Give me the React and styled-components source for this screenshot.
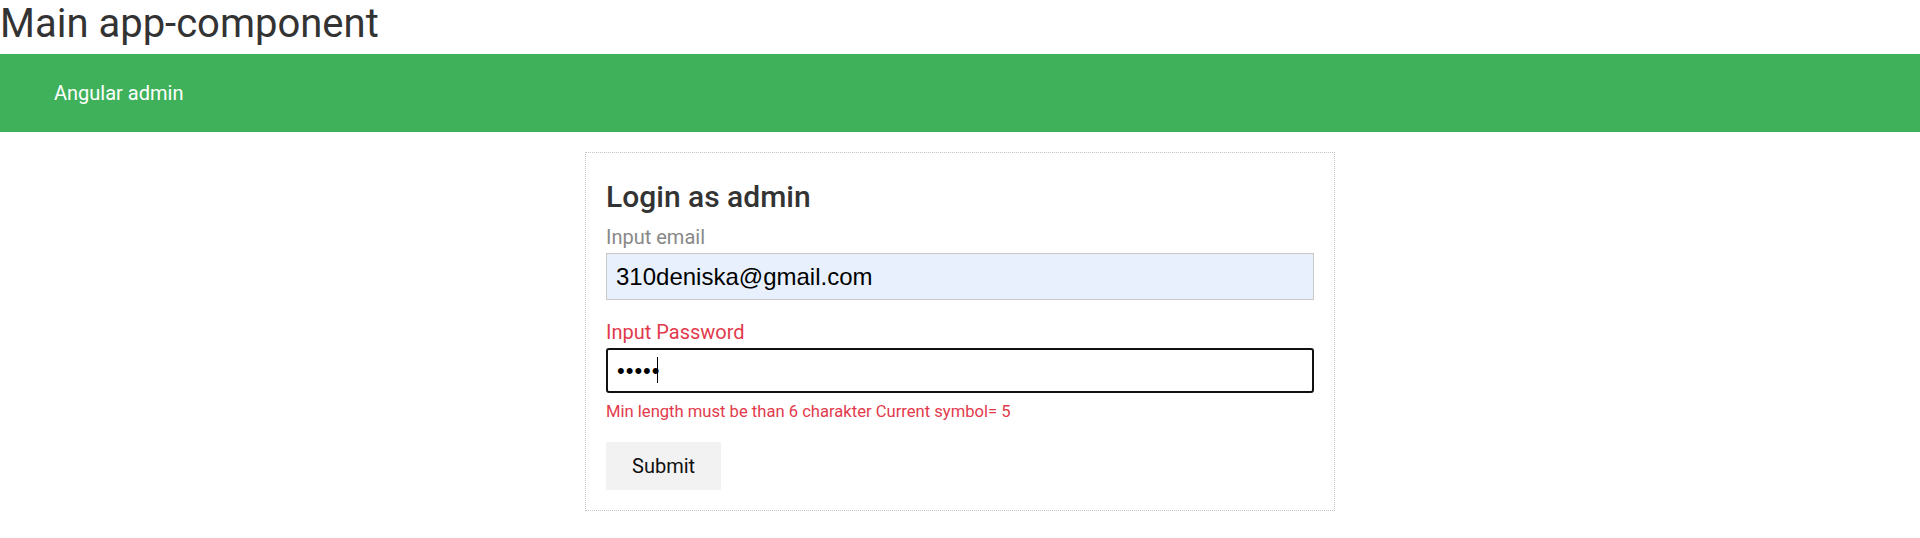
import React, { useState } from "react";
import styled, { createGlobalStyle } from "styled-components";

const GlobalStyle = createGlobalStyle`
  body {
    margin: 0;
    background: #fff;
    font-family: Roboto, "Noto Sans", sans-serif;
  }
`;

const Title = styled.h1`
  margin: 0 0 7px;
  font-size: 40px;
  font-weight: 400;
  color: #333;
  line-height: normal;
`;

const Navbar = styled.nav`
  height: 78px;
  background: #3fb15b;
  display: flex;
  align-items: center;
  padding-left: 54px;
`;

const Brand = styled.span`
  color: white;
  font-size: 20px;
`;

const Card = styled.form`
  box-sizing: border-box;
  width: 750px;
  margin: 20px auto 0;
  padding: 20px;
  border: 1px dotted #c4c4c4;
  display: flex;
  flex-direction: column;
`;

const CardHeader = styled.h2`
  margin: 6px 0 11px;
  font-size: 30px;
  font-weight: 500;
  color: #333;
  line-height: normal;
`;

const Field = styled.div`
  display: flex;
  flex-direction: column;
  margin-bottom: ${props => (props.last ? "0" : "20px")};
`;

const Label = styled.label`
  font-size: 20px;
  margin-bottom: 4px;
  color: ${props => (props.invalid ? "#e23a4c" : "#888")};
`;

const InputWrap = styled.div`
  position: relative;
`;

const Input = styled.input`
  box-sizing: border-box;
  width: 100%;
  height: ${props => (props.focused ? "45px" : "47px")};
  padding: 0 9px;
  font-family: "Liberation Sans", Arial, sans-serif;
  font-size: ${props => (props.type === "password" ? "22px" : "24px")};
  color: #000;
  background: ${props => (props.autofilled ? "#e8f0fe" : "#fff")};
  border: ${props => (props.focused ? "2px solid #111" : "1px solid #c8c8c8")};
  border-radius: ${props => (props.focused ? "3px" : "0")};
  outline: none;
  letter-spacing: ${props => (props.type === "password" ? "1px" : "0")};
`;

const Caret = styled.span`
  position: absolute;
  left: 51px;
  top: 9px;
  width: 1px;
  height: 26px;
  background: #000;
`;

const ErrorText = styled.div`
  margin-top: 9px;
  font-size: 16.6px;
  color: #e23a4c;
`;

const Submit = styled.button`
  align-self: flex-start;
  margin-top: 21px;
  height: 48px;
  padding: 0 26px;
  border: none;
  background: #f2f2f2;
  color: #111;
  font-family: Roboto, sans-serif;
  font-size: 20px;
  cursor: pointer;
`;

export default function App() {
  const [email, setEmail] = useState("310deniska@gmail.com");
  const [password, setPassword] = useState("12345");
  const minLength = 6;

  return (
    <>
      <GlobalStyle />
      <Title>Main app-component</Title>
      <Navbar>
        <Brand>Angular admin</Brand>
      </Navbar>
      <Card onSubmit={event => event.preventDefault()}>
        <CardHeader>Login as admin</CardHeader>
        <Field>
          <Label htmlFor="email">Input email</Label>
          <Input
            id="email"
            type="email"
            autofilled
            value={email}
            onChange={event => setEmail(event.target.value)}
          />
        </Field>
        <Field last>
          <Label htmlFor="password" invalid>
            Input Password
          </Label>
          <InputWrap>
            <Input
              id="password"
              type="password"
              focused
              value={password}
              onChange={event => setPassword(event.target.value)}
            />
            <Caret />
          </InputWrap>
        </Field>
        {password.length < minLength && (
          <ErrorText>
            Min length must be than {minLength} charakter Current symbol={" "}
            {password.length}
          </ErrorText>
        )}
        <Submit type="submit">Submit</Submit>
      </Card>
    </>
  );
}
